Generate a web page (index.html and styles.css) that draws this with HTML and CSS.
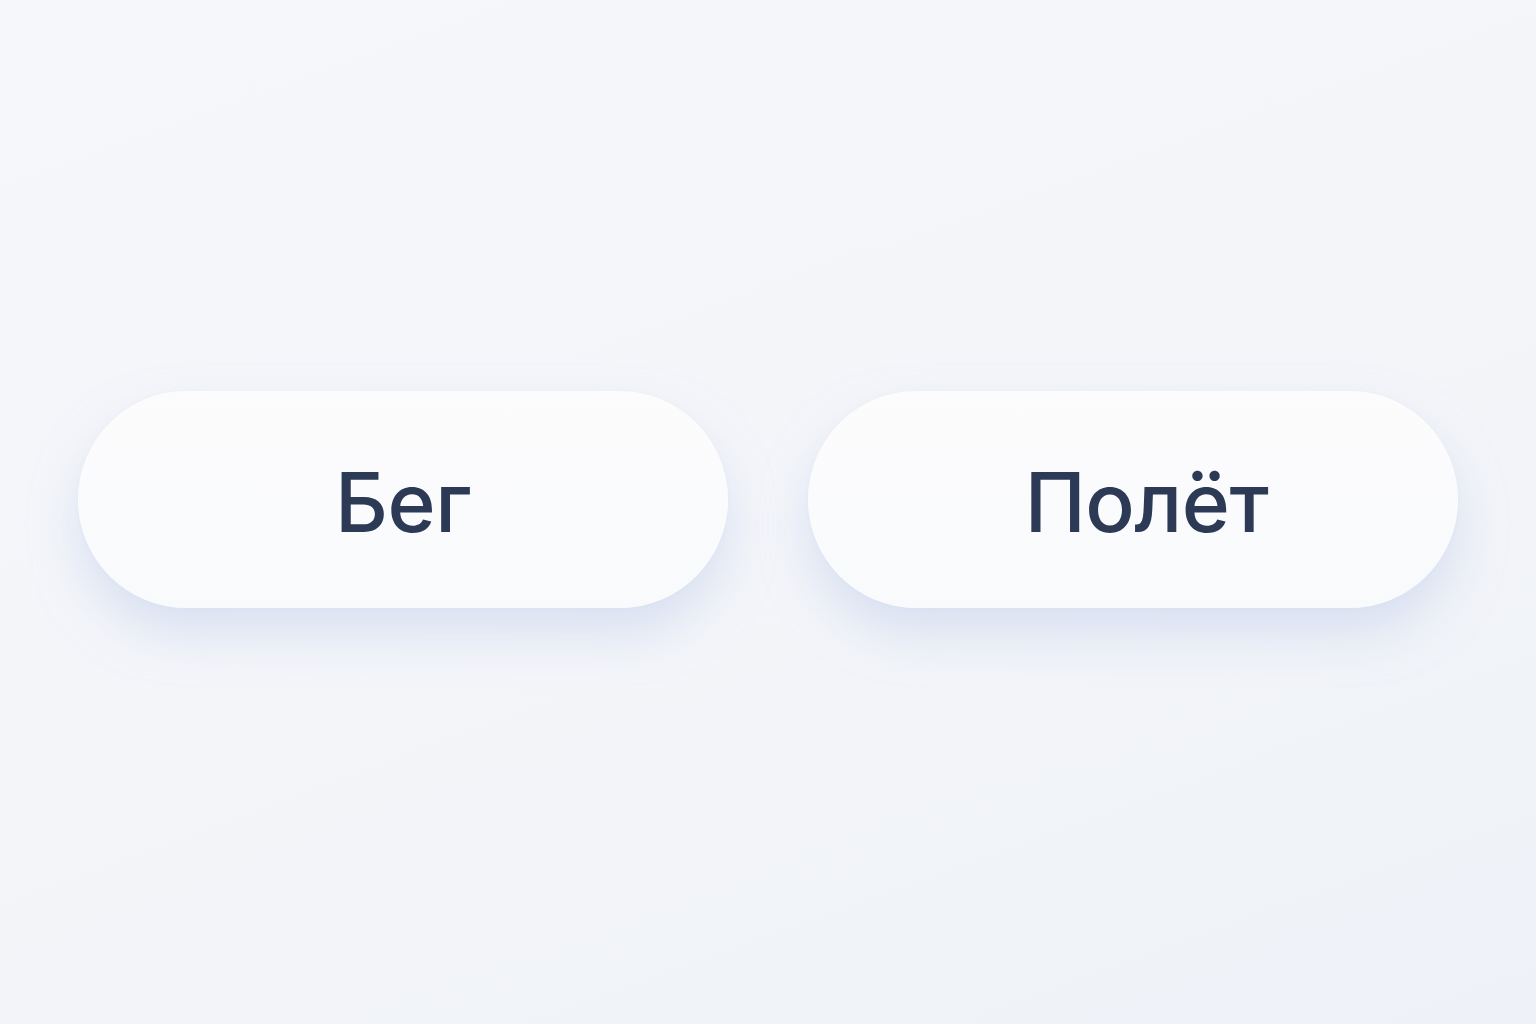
FILE: index.html
```html
<!DOCTYPE html>
<html lang="ru">
<head>
<meta charset="utf-8">
<title>Режим</title>
<link rel="stylesheet" href="styles.css">
</head>
<body>
<main class="stage">
  <div class="choices">
    <button class="pill" type="button">Бег</button>
    <button class="pill pill--shifted" type="button">Полёт</button>
  </div>
</main>
</body>
</html>
```
FILE: styles.css
```css
html, body {
  margin: 0;
  height: 100%;
}

body {
  background: linear-gradient(160deg, #f6f7fa 0%, #f3f5f9 55%, #eef1f7 100%);
  font-family: "Inter", "Noto Sans", "Liberation Sans", sans-serif;
}

.stage {
  height: 100%;
  display: flex;
  align-items: center;
  justify-content: center;
  padding-bottom: 25px;
  box-sizing: border-box;
}

.choices {
  display: flex;
  gap: 80px;
}

.pill {
  width: 650px;
  height: 217px;
  border: none;
  border-radius: 9999px;
  background: linear-gradient(180deg, #fcfcfd 0%, #f9fafc 100%);
  box-shadow:
    0 26px 46px rgba(200, 212, 236, 0.6),
    0 1px 4px rgba(215, 222, 238, 0.2);
  color: #2d3a56;
  font-family: inherit;
  font-size: 82px;
  font-weight: 550;
  letter-spacing: -0.5px;
  line-height: 1;
  padding: 6px 0 0;
  cursor: pointer;
}

.pill--shifted {
  padding-left: 27px;
}
```
